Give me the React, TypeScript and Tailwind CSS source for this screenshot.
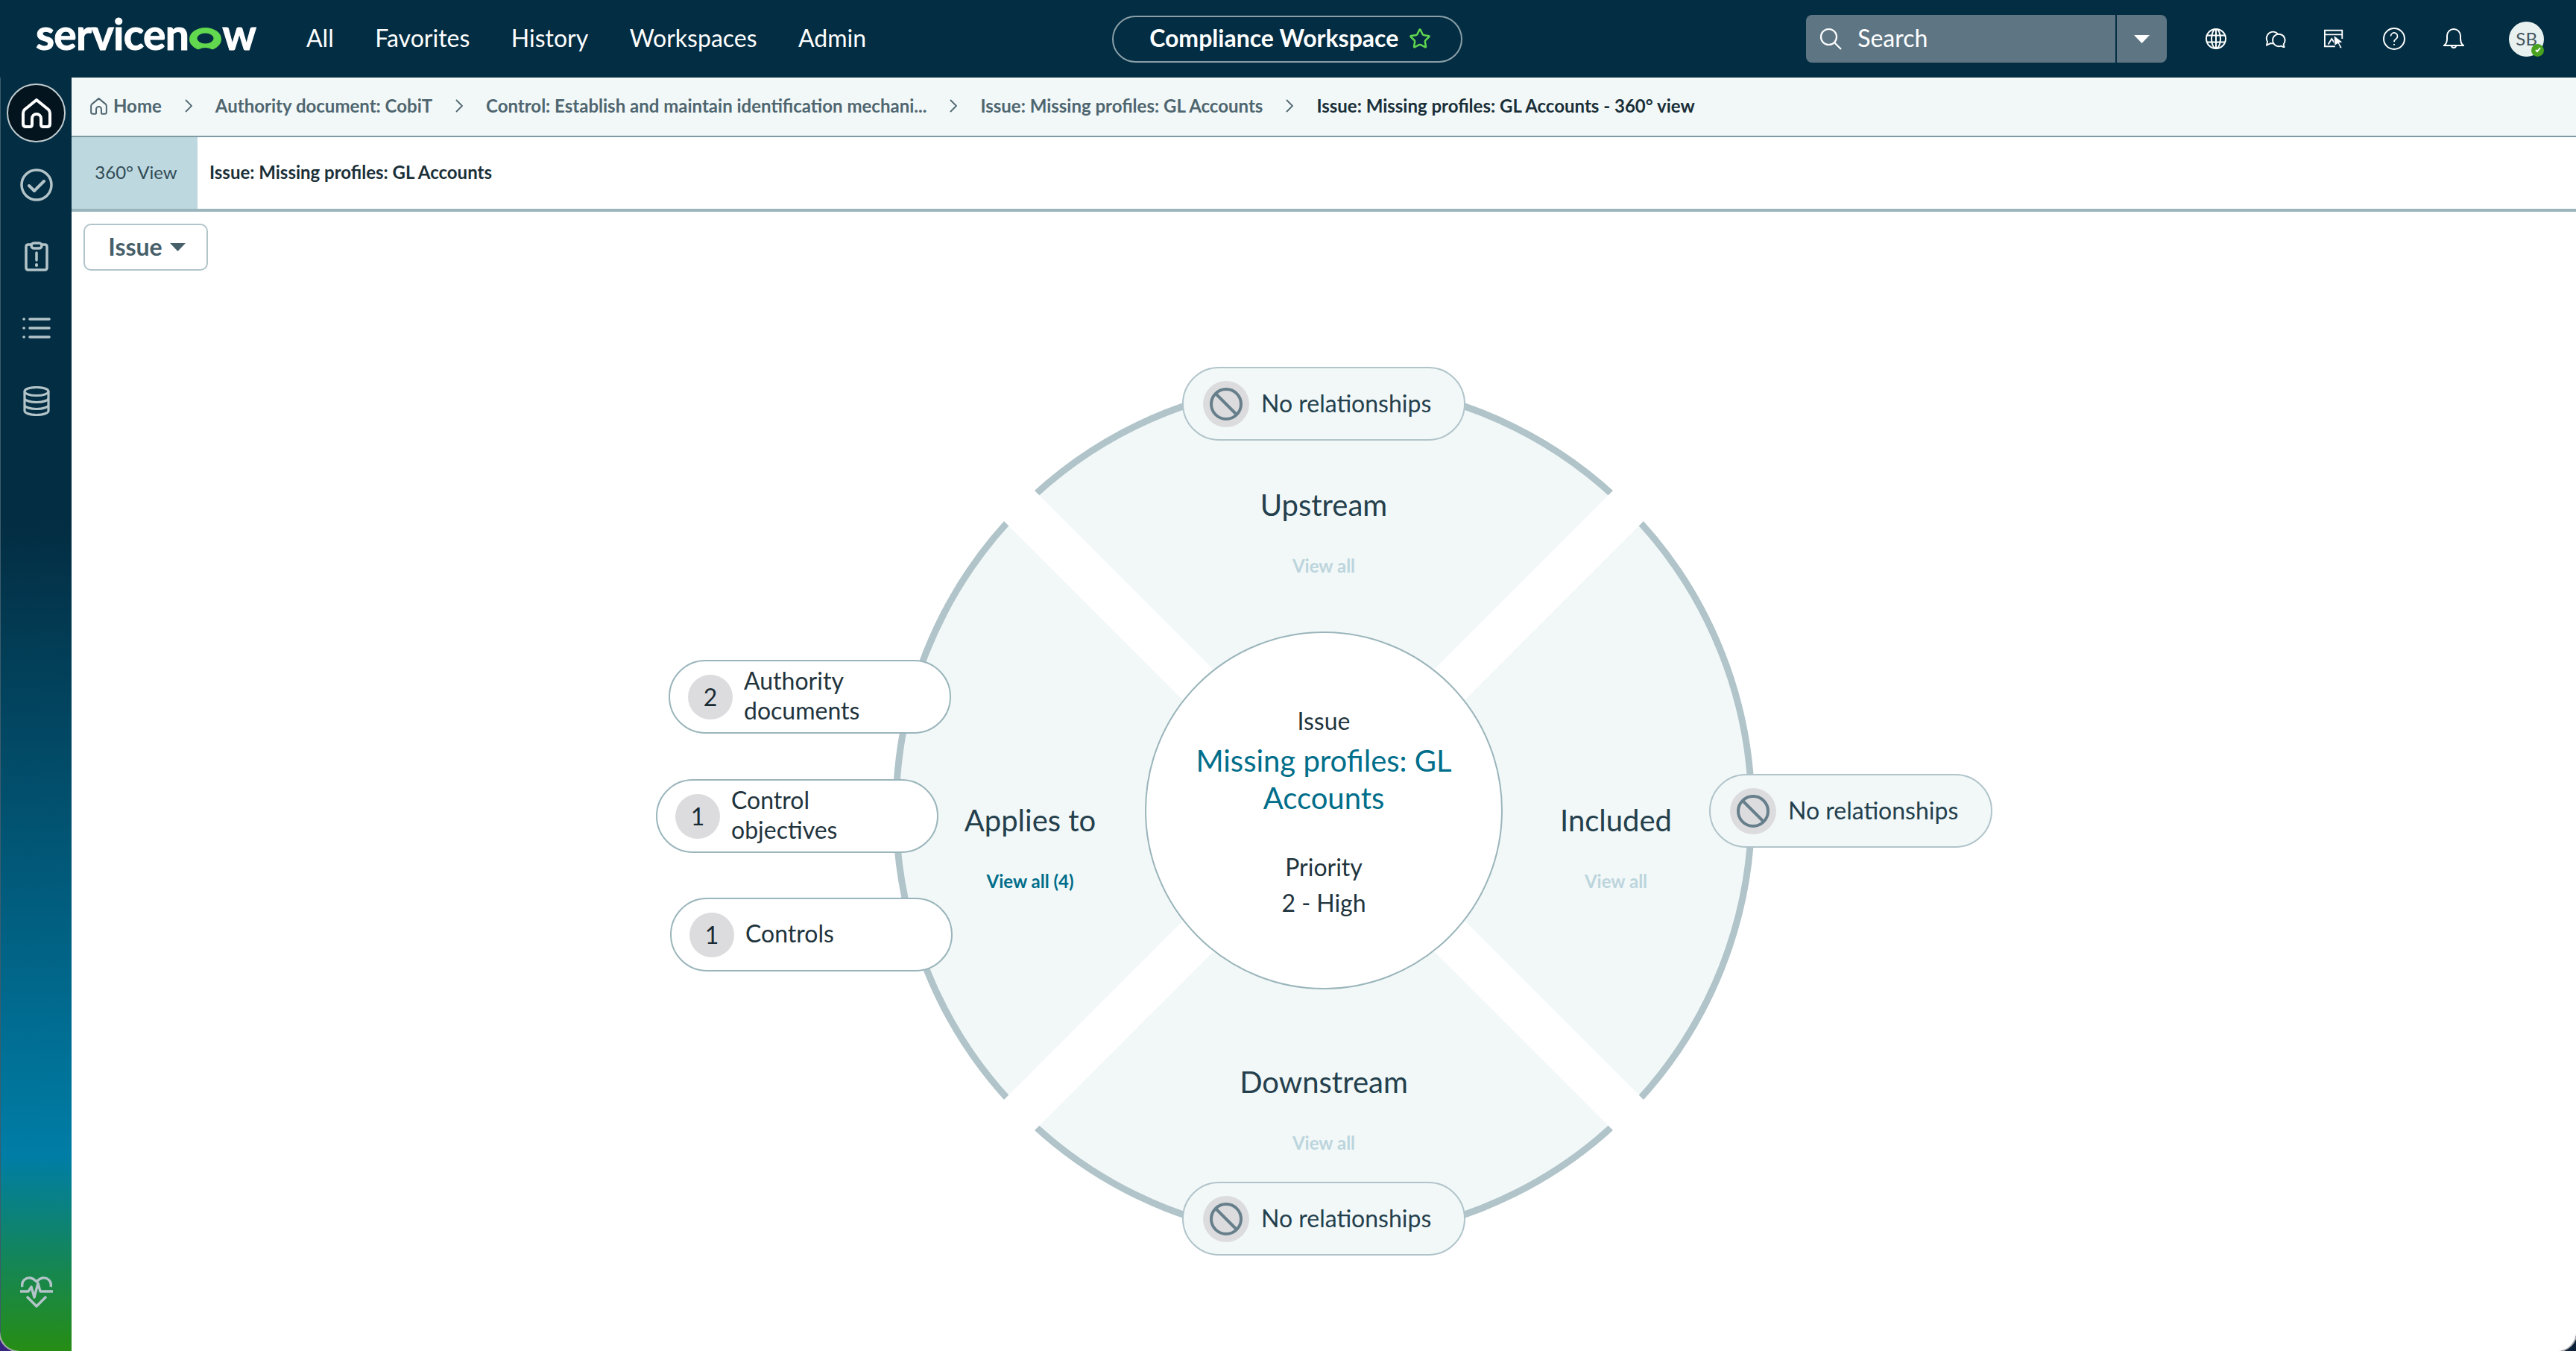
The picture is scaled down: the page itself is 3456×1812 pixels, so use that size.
import { Star } from 'lucide-react'

const navItems = ['All', 'Favorites', 'History', 'Workspaces', 'Admin']

const crumbs = [
  'Authority document: CobiT',
  'Control: Establish and maintain identification mechani...',
  'Issue: Missing profiles: GL Accounts',
]

export default function App() {
  return (
    <div className="w-[3456px] h-[1812px] overflow-hidden bg-gradient-to-r from-[#35257e] to-[#0b2238] font-['Lato',sans-serif]">
      <div className="w-full h-full flex flex-col overflow-hidden rounded-b-[26px] bg-white shadow-[0_0_0_2px_#a8a8ac]">
        <Header />
        <div className="flex flex-1 min-h-0">
          <Sidebar />
          <main className="flex-1 min-w-0 flex flex-col bg-white">
            <Breadcrumbs />
            <div className="h-[100px] flex border-b-4 border-[#9ab5bb]">
              <div className="w-[169px] pl-[4px] pb-[2px] bg-[#bed8df] flex items-center justify-center text-[24px] text-[#2f4a55]">360° View</div>
              <div className="pl-4 pb-[2px] flex items-center text-[24px] font-bold text-[#1a2f38]">Issue: Missing profiles: GL Accounts</div>
            </div>
            <div className="flex-1 px-4 pt-4">
              <button className="w-[167px] h-[63px] pl-[3px] flex items-center justify-center gap-[10px] rounded-[10px] border-2 border-[#b0c4ca] text-[32px] font-bold text-[#475f69]">
                <span className="mb-[2px]">Issue</span>
                <svg width="21" height="11" viewBox="0 0 21 11"><path d="M0 0h21L10.5 11z" fill="#475f69" /></svg>
              </button>
              <div className="flex justify-center mt-[144px]">
                <Wheel />
              </div>
            </div>
          </main>
        </div>
      </div>
    </div>
  )
}

function Header() {
  return (
    <header className="h-[104px] shrink-0 bg-[#032d42] flex items-center text-white">
      <Logo />
      <nav className="flex items-center gap-[55.5px] ml-[68px] pb-[2px] text-[32px]">
        {navItems.map(n => (
          <span key={n}>{n}</span>
        ))}
      </nav>
      <div className="ml-[330px] w-[470px] h-[63px] flex items-center pl-[48px] gap-[14px] rounded-full border-2 border-[#8a9fa8] text-[32px] font-bold">
        <span className="mb-[2px] whitespace-nowrap">Compliance Workspace</span>
        <Star className="w-[30px] h-[30px] text-[#62d84e]" strokeWidth={2} />
      </div>
      <div className="ml-[461px] w-[484px] h-[64px] flex rounded-[8px] bg-[#5e7684]">
        <div className="flex-1 flex items-center pl-[18px] gap-[21px] text-[32px]">
          <svg width="30" height="30" viewBox="0 0 30 30" fill="none" stroke="white" strokeWidth="2.2"><circle cx="12.5" cy="12.5" r="10.5" /><path d="M20 20l9 9" /></svg>
          <span className="mb-[2px]">Search</span>
        </div>
        <div className="w-[69px] border-l-2 border-[#032d42] flex items-center justify-center">
          <svg width="21" height="11" viewBox="0 0 21 11"><path d="M0 0h21L10.5 11z" fill="white" /></svg>
        </div>
      </div>
      <div className="ml-[52px] flex items-center gap-[51px]">
        <GlobeIcon />
        <ChatIcon />
        <PickerIcon />
        <HelpIcon />
        <BellIcon />
      </div>
      <div className="relative ml-[60px] w-[47px] h-[47px] rounded-full bg-[#e8f0f0] flex items-center justify-center text-[24px] text-[#44565e]">
        SB
        <span className="absolute right-0 bottom-0 w-[17px] h-[17px] rounded-full bg-[#4aa31e] flex items-center justify-center">
          <svg width="10" height="10" viewBox="0 0 10 10" fill="none" stroke="white" strokeWidth="2"><path d="M2 5l2 2 4-5" /></svg>
        </span>
      </div>
    </header>
  )
}

function Logo() {
  return (
    <div className="ml-[48px] mb-[14px] flex items-baseline text-[57px] leading-none font-bold text-white tracking-[-0.7px] [-webkit-text-stroke:1px_white] w-[295px] shrink-0">
      servicen
      <svg className="mx-[1px] shrink-0 self-end mb-[6px]" width="43" height="31" viewBox="0 0 43 31">
        <ellipse cx="21.5" cy="15.5" rx="21.5" ry="15.5" fill="#62d84e" />
        <ellipse cx="21.5" cy="14.5" rx="11" ry="7" fill="#032d42" />
        <ellipse cx="21.5" cy="33" rx="11" ry="6" fill="#032d42" />
      </svg>
      w
    </div>
  )
}

function Breadcrumbs() {
  return (
    <div className="h-[80px] shrink-0 bg-[#f2f8f8] border-b-2 border-[#7f9aa3] pl-[25px] pb-[2px] flex items-center gap-[31px] text-[24px] font-bold text-[#4f6670]">
      <div className="flex items-center gap-[8px]">
        <HomeIcon size={23} stroke={3.5} color="#4f6670" />
        Home
      </div>
      {crumbs.map(c => (
        <div key={c} className="flex items-center gap-[31px]">
          <Chevron />
          {c}
        </div>
      ))}
      <Chevron />
      <span className="text-[#1a2f38]">Issue: Missing profiles: GL Accounts - 360° view</span>
    </div>
  )
}

function Chevron() {
  return (
    <svg width="10" height="18" viewBox="0 0 10 18" fill="none" stroke="#4f6670" strokeWidth="1.8"><path d="M1 1l8 8-8 8" /></svg>
  )
}

function Sidebar() {
  return (
    <aside className="w-[96px] shrink-0 flex flex-col items-center border-l border-[#3d5c6c] bg-[linear-gradient(180deg,#032d42_35%,#007da6_84.7%,#268d14_100%)]">
      <div className="mt-[8px] w-[79px] h-[79px] rounded-full bg-[#03141e] border-2 border-[#c0ccd0] flex items-center justify-center">
        <HomeIcon size={40} stroke={4} color="white" />
      </div>
      <div className="mt-[35px] flex flex-col items-center text-[#b3c4c9]">
        <svg width="44" height="44" viewBox="0 0 44 44" fill="none" stroke="currentColor" strokeWidth="3.5"><circle cx="22" cy="22" r="20" /><path d="M12 23l7 7 13-13" strokeLinecap="round" strokeLinejoin="round" strokeWidth="4" /></svg>
        <svg className="mt-[54px]" width="32" height="40" viewBox="0 0 32 40" fill="none" stroke="currentColor" strokeWidth="3.5"><path d="M9 4H5Q2 4 2 7v28q0 3 3 3h22q3 0 3-3V7q0-3-3-3h-4" /><rect x="9" y="2" width="14" height="7" rx="3.5" /><path d="M16 15v10" strokeLinecap="round" /><path d="M16 31v1" strokeLinecap="round" strokeWidth="4" /></svg>
        <svg className="mt-[62px]" width="38" height="28" viewBox="0 0 38 28" fill="none" stroke="currentColor" strokeWidth="3.6" strokeLinecap="round"><path d="M2 2h.2M2 14h.2M2 26h.2M10 2h26M10 14h26M10 26h26" /></svg>
        <svg className="mt-[64px]" width="36" height="40" viewBox="0 0 36 40" fill="none" stroke="currentColor" strokeWidth="3.2"><ellipse cx="18" cy="7" rx="16" ry="5.5" /><path d="M2 7v26c0 3 7 5.5 16 5.5s16-2.5 16-5.5V7M2 16c0 3 7 5.5 16 5.5s16-2.5 16-5.5M2 25c0 3 7 5.5 16 5.5s16-2.5 16-5.5" /></svg>
      </div>
      <div className="mt-auto mb-[58px] text-[#b3c4c9]">
        <svg width="44" height="42" viewBox="0 0 44 42" fill="none" stroke="currentColor" strokeWidth="3.4" strokeLinejoin="round"><path d="M3 14C1 6 8 1 14 2c4 .6 6 3 8 5 2-2 4-4.400 8-5 6-1 13 4 11 12" /><path d="M0 20h11l4-6 4 14 5-19 3 11h17" /><path d="M9 27l13 13 13-13" /></svg>
      </div>
    </aside>
  )
}

function HomeIcon({ size, stroke, color }: { size: number; stroke: number; color: string }) {
  return (
    <svg width={size} height={size} viewBox="0 0 40 40" fill="none" stroke={color} strokeWidth={stroke} strokeLinejoin="round">
      <path d="M20 2 36 15Q38 17 38 20V34Q38 38 34 38H29Q26 38 26 35V27A6 6 0 0 0 14 27V35Q14 38 11 38H6Q2 38 2 34V20Q2 17 4 15Z" />
    </svg>
  )
}

function GlobeIcon() {
  return (
    <svg width="28" height="28" viewBox="0 0 28 28" fill="none" stroke="white" strokeWidth="2"><circle cx="14" cy="14" r="13" /><ellipse cx="14" cy="14" rx="6" ry="13" /><path d="M2 9.500h24M2 18.500h24M14 1v26" /></svg>
  )
}

function ChatIcon() {
  return (
    <svg width="29" height="24" viewBox="0 0 30 24" fill="none" stroke="white" strokeWidth="2" strokeLinejoin="round">
      <path d="M18.300 5A9 9 0 0 0 4.200 16L3 21l5.500-2.700Q10 18.600 12 18.400" />
      <path d="M23 22A8.500 8.500 0 1 1 26.500 19.500L27.500 24z" />
    </svg>
  )
}

function PickerIcon() {
  return (
    <svg width="28" height="28" viewBox="0 0 30 28" fill="none" stroke="white" strokeWidth="2"><path d="M26 14V2H1v23h15M1 8h25M6 22l5-8 4 6" /><path d="M14 9l13 10-5 1 4 7-3 1-3-7-5 3z" fill="white" stroke="#032d42" strokeWidth="1" /></svg>
  )
}

function HelpIcon() {
  return (
    <svg width="30" height="30" viewBox="0 0 30 30" fill="none" stroke="white" strokeWidth="2"><circle cx="15" cy="15" r="14" /><path d="M10.500 11.500a4.500 4.500 0 1 1 7 3.700c-1.700 1.100-2.500 2-2.500 4" strokeWidth="1.700" /><path d="M15 22v1.500" /></svg>
  )
}

function BellIcon() {
  return (
    <svg width="28" height="28" viewBox="0 0 28 28" fill="none" stroke="white" strokeWidth="2"><path d="M1 23c3-2 4-4 4-9V10a9 9 0 0 1 18 0v4c0 5 1 7 4 9z" /><path d="M11 23a3 3 0 0 0 6 0" /></svg>
  )
}

function Wheel() {
  return (
    <div className="relative w-[1160px] h-[1160px] shrink-0">
      <svg className="absolute inset-0" width="1160" height="1160" viewBox="0 0 1160 1160">
        <circle cx="580" cy="580" r="574" fill="#f2f8f8" stroke="#b0c4ca" strokeWidth="9" />
        <path d="M0 0 1160 1160M1160 0 0 1160" stroke="white" strokeWidth="58" />
      </svg>

      <div className="absolute left-[340px] top-[340px] w-[480px] h-[480px] rounded-full bg-white border-2 border-[#9ab5bb] flex flex-col items-center pt-[94px] text-[#1f343d] text-[32px] leading-[48px]">
        <span>Issue</span>
        <span className="mt-[4px] w-[400px] text-center text-[40px] leading-[50px] text-[#006e8a]">Missing profiles: GL Accounts</span>
        <span className="mt-[44px]">Priority</span>
        <span>2 - High</span>
      </div>

      <SectorLabel className="left-[430px] top-[146px]" title="Upstream" link="View all" />
      <SectorLabel className="left-[36px] top-[569px]" title="Applies to" link="View all (4)" active />
      <SectorLabel className="left-[822px] top-[569px]" title="Included" link="View all" />
      <SectorLabel className="left-[430px] top-[920px]" title="Downstream" link="View all" />

      <EmptyPill className="left-[390px] -top-[15px]" />
      <EmptyPill className="left-[390px] top-[1078px]" />
      <EmptyPill className="left-[1097px] top-[531px]" />

      <CountPill className="-left-[299px] top-[378px]" count={2} lines={['Authority', 'documents']} />
      <CountPill className="-left-[316px] top-[538px]" count={1} lines={['Control', 'objectives']} />
      <CountPill className="-left-[297px] top-[697px]" count={1} lines={['Controls']} />
    </div>
  )
}

function SectorLabel({ className, title, link, active }: { className: string; title: string; link: string; active?: boolean }) {
  return (
    <div className={`absolute w-[300px] flex flex-col items-center ${className}`}>
      <span className="text-[40px] leading-[48px] text-[#24404d]">{title}</span>
      <span className={`mt-[42px] text-[24px] leading-[32px] font-bold ${active ? 'text-[#006e8a]' : 'text-[#bcd5dd]'}`}>{link}</span>
    </div>
  )
}

function EmptyPill({ className }: { className: string }) {
  return (
    <div className={`absolute w-[380px] h-[99px] rounded-full bg-[#f2f8f8] border-2 border-[#b0c4ca] pl-[26px] flex items-center gap-[16px] text-[32px] text-[#24404d] ${className}`}>
      <span className="w-[62px] h-[62px] rounded-full bg-[#dcdcdf] flex items-center justify-center shrink-0">
        <svg width="44" height="44" viewBox="0 0 44 44" fill="none" stroke="#667f8b" strokeWidth="4"><circle cx="22" cy="22" r="20" /><path d="M8 8l28 28" /></svg>
      </span>
      <span className="mb-[2px]">No relationships</span>
    </div>
  )
}

function CountPill({ className, count, lines }: { className: string; count: number; lines: string[] }) {
  return (
    <div className={`absolute w-[379px] h-[99px] rounded-full bg-white border-2 border-[#9ab5bb] pl-[24px] flex items-center gap-[15px] text-[32px] leading-[40px] text-[#1f343d] ${className}`}>
      <span className="w-[60px] h-[60px] rounded-full bg-[#dcdcdf] flex items-center justify-center shrink-0 text-[#1a2b33]">{count}</span>
      <div className="mb-[3px]">
        {lines.map(l => (
          <div key={l}>{l}</div>
        ))}
      </div>
    </div>
  )
}
